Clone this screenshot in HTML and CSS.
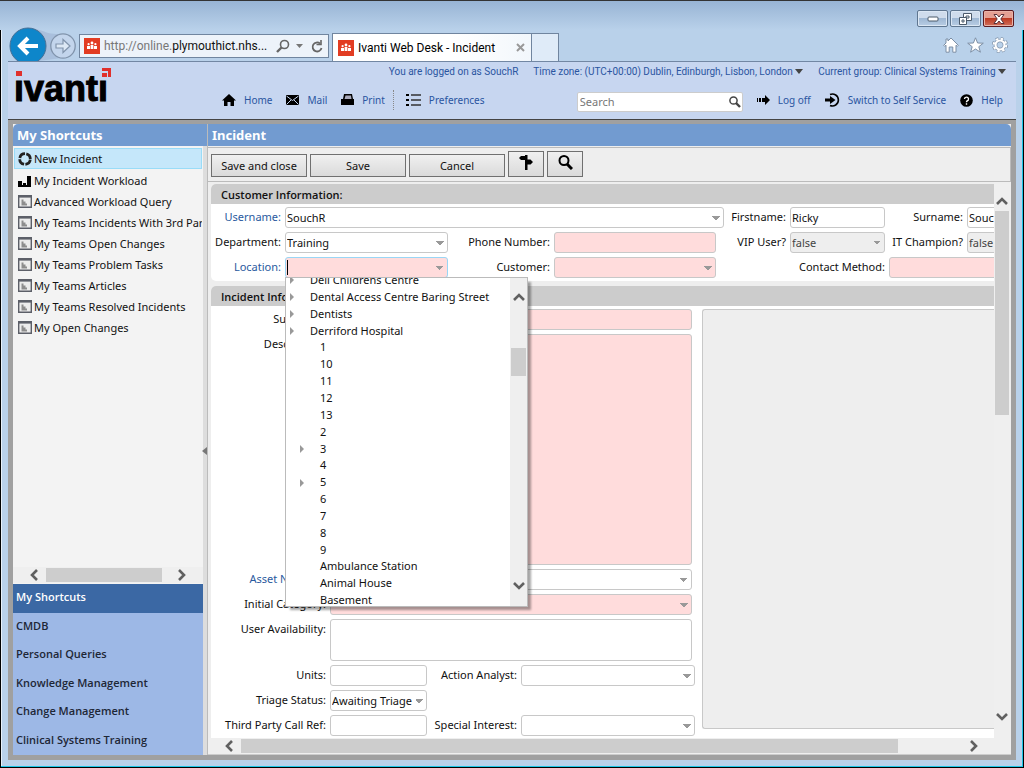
FILE: index.html
```html
<!DOCTYPE html>
<html lang="en">
<head>
<meta charset="utf-8">
<title>Ivanti Web Desk - Incident</title>
<link rel="stylesheet" href="styles.css">
</head>
<body>
<svg class="defs" aria-hidden="true">
  <symbol id="people" viewBox="0 0 16 16"><rect width="16" height="16" fill="#e23c22"/><g fill="#fff"><circle cx="8" cy="5" r="1.4"/><circle cx="4.6" cy="6.2" r="1.1"/><circle cx="11.4" cy="6.2" r="1.1"/><path d="M6.6 7h2.8v4H6.6zM3 8h3v3H3zM10 8h3v3h-3z"/></g></symbol>
  <symbol id="query" viewBox="0 0 14 13"><path d="M.7.7h12.6v11.6H.7z" fill="#ececec" stroke="#5c5f68" stroke-width="1.4"/><path d="M1 1.8h12" stroke="#5c5f68" stroke-width="1.6"/><path d="M3.5 4.5h2v2h2v2h1.5v2H3.5z" fill="#8d8d8d"/></symbol>
  <symbol id="up" viewBox="0 0 12 8"><path d="M1 7l5-5 5 5" fill="none" stroke="#606060" stroke-width="2.6"/></symbol>
</svg>
<div class="window">
  <header class="titlebar">
    <button class="win" aria-label="Minimize"><svg width="12" height="6"><rect x="1" y="1" width="10" height="4" rx="1" fill="#fff" stroke="#4b5a6b"/></svg></button>
    <button class="win" aria-label="Restore"><svg width="13" height="12" fill="#fff" stroke="#4b5a6b"><path d="M4.500.5h8v7h-8z"/><path d="M7 3h3v2H7z"/><path d="M.5 4.500h7v7h-7z"/><path d="M3 7h2v2H3z"/></svg></button>
    <button class="win close" aria-label="Close"><svg width="12" height="10"><path d="M1 .5h3l2 2.500 2-2.500h3L7.800 5 11 9.500H8L6 7 4 9.500H1L4.200 5z" fill="#fff" stroke="#59323a"/></svg></button>
  </header>
  <div class="frame">
    <div class="chrome">
      <div class="history">
        <svg width="70" height="35" viewBox="0 0 70 35">
          <path d="M20 1c14 0 16 7 34 6v24L22 35z" fill="#a9bfdc"/>
          <circle cx="20" cy="19" r="18" fill="#0e86ca" stroke="#476f95"/>
          <path d="M30 19H13m7-8l-8 8 8 8" fill="none" stroke="#fff" stroke-width="4"/>
          <circle cx="55" cy="19" r="12.200" fill="#c3d5ec" stroke="#8194ac" stroke-width="1.300"/>
          <path d="M48 17h7v-4.500l7 6.500-7 6.500V21h-7z" fill="#dce8f5" stroke="#8194ac" stroke-width="1.200"/>
        </svg>
      </div>
      <div class="address">
        <svg width="16" height="16"><use href="#people"/></svg>
        <span class="url">http://online.<b>plymouthict.nhs...</b></span>
        <svg width="14" height="14" fill="none" stroke="#666"><circle cx="8.500" cy="5.500" r="4" stroke-width="1.600"/><path d="M5.500 8.500L1 13" stroke-width="2.400"/></svg>
        <svg width="7" height="4"><path d="M0 0h7L3.500 4z" fill="#777"/></svg>
        <svg class="reload" width="12" height="13" fill="none" stroke="#666" stroke-width="1.800"><path d="M9 3.500a4.500 4.500 0 1 0 1.500 4.500"/><path d="M10 0v4.500H5.500" stroke-width="1.600"/></svg>
      </div>
      <div class="tab">
        <svg width="16" height="16"><use href="#people"/></svg>
        <span class="tabname">Ivanti Web Desk - Incident</span>
        <svg width="9" height="9"><path d="M1 1l7 7M8 1L1 8" stroke="#999" stroke-width="2"/></svg>
      </div>
      <div class="newtab"></div>
      <div class="tools">
        <svg width="16" height="16" fill="#fff" stroke="#7d8fa5"><path d="M8 1l7.300 7.300-1 1L13 8.200v7H9.800V10H6.200v5.200H3v-7L1.700 9.300l-1-1L3 6V2h2v2z"/></svg>
        <svg width="17" height="16" fill="#fff" stroke="#7d8fa5"><path d="M8.500.8l2.100 5.200 5.700.2-4.500 3.500 1.600 5.500-4.900-3.200-4.900 3.200 1.600-5.500L.7 6.200l5.700-.2z"/></svg>
        <svg width="16" height="16" viewBox="-8 -8 16 16"><circle r="6.500" fill="none" stroke="#7d8fa5" stroke-width="3" stroke-dasharray="2.800 2.300"/><circle r="4.500" fill="none" stroke="#7d8fa5" stroke-width="3.600"/><circle r="6.300" fill="none" stroke="#fff" stroke-width="2" stroke-dasharray="2.400 2.550"/><circle r="4.500" fill="none" stroke="#fff" stroke-width="2.200"/></svg>
      </div>
    </div>

    <div class="page">
      <div class="banner">
        <svg class="logo" width="98" height="38" viewBox="0 0 98 38" role="img" aria-label="ivanti">
          <text class="logotext" x="-1" y="35">ivanti</text>
          <path d="M0 0h14v13H0zM80 0h18v13H80z" fill="#c7d6f0"/>
          <path d="M1 5h6v5H1zM87 2h9v9h-3V5h-6zM87 7h5v4h-5z" fill="#e0302c"/>
        </svg>
        <div class="bannerlinks">
          <div class="status">
            <span>You are logged on as SouchR</span>
            <button class="plain">Time zone: (UTC+00:00) Dublin, Edinburgh, Lisbon, London <i class="caret"></i></button>
            <button class="plain">Current group: Clinical Systems Training <i class="caret"></i></button>
          </div>
          <div class="menu">
            <a href="#"><svg width="14" height="12"><path d="M7 0l7 6.500h-2V12H8.500V8h-3v4H2V6.500H0z"/></svg>Home</a>
            <a href="#"><svg width="13" height="10"><path d="M0 0h13v10H0z"/><path d="M.5 1l6 4.500 6-4.500M.5 9.500L5 5M12.500 9.500L8 5" fill="none" stroke="#c7d6f0"/></svg>Mail</a>
            <a href="#"><svg width="13" height="12"><path d="M3 0h8l1 5h1v6H0V5h2z"/><path d="M4.500 1.500h5.500l.5 3.500h-7z" fill="#aab"/></svg>Print</a>
            <a class="prefs" href="#"><svg width="15" height="12"><path d="M0 1h3M0 6h3M0 11h3" stroke="#000" stroke-width="2"/><path d="M5 1h10M5 6h10M5 11h10" stroke="#333" stroke-width="1.400"/></svg>Preferences</a>
            <form class="search"><input type="text" placeholder="Search" aria-label="Search"><button class="plain" type="button" aria-label="Search"><svg width="12" height="12" fill="none" stroke="#444"><circle cx="4.500" cy="4.500" r="3.600" stroke-width="1.500"/><path d="M7 7l4 4" stroke-width="2.400"/></svg></button></form>
            <a href="#"><svg width="13" height="10"><path d="M0 3h1v4H0zM2 3h2v4H2zM5 3h3V0l5 5-5 5V7H5z"/></svg>Log off</a>
            <a href="#"><svg width="15" height="14"><path d="M5 1.500a6 6 0 1 1 0 11" fill="none" stroke="#000" stroke-width="1.600"/><path d="M0 5.500h5V3l5.500 4L5 11V8.500H0z"/></svg>Switch to Self Service</a>
            <a href="#"><svg width="13" height="13"><circle cx="6.500" cy="6.500" r="6.300"/><path d="M4.500 5a2 2 0 1 1 2.600 2c-.6.300-.6.600-.6 1.300M6.500 9.300v1.500" fill="none" stroke="#fff" stroke-width="1.400"/></svg>Help</a>
          </div>
        </div>
      </div>

      <div class="desk">
        <aside class="side">
          <h2 class="title">My Shortcuts</h2>
          <ul class="shortcuts">
            <li class="current"><svg width="14" height="14" viewBox="-7 -7 14 14"><circle r="5.300" fill="none" stroke="#222" stroke-width="2.800" stroke-dasharray="7 1.325" stroke-dashoffset="-.7"/></svg><a href="#">New Incident</a></li>
            <li><svg width="14" height="12"><path d="M0 6h4v5H0zM5 8h3v3H5zM9 1h4v10H9zM0 10h13v2H0z"/></svg><a href="#">My Incident Workload</a></li>
            <li><svg width="14" height="13"><use href="#query"/></svg><a href="#">Advanced Workload Query</a></li>
            <li><svg width="14" height="13"><use href="#query"/></svg><a href="#">My Teams Incidents With 3rd Party</a></li>
            <li><svg width="14" height="13"><use href="#query"/></svg><a href="#">My Teams Open Changes</a></li>
            <li><svg width="14" height="13"><use href="#query"/></svg><a href="#">My Teams Problem Tasks</a></li>
            <li><svg width="14" height="13"><use href="#query"/></svg><a href="#">My Teams Articles</a></li>
            <li><svg width="14" height="13"><use href="#query"/></svg><a href="#">My Teams Resolved Incidents</a></li>
            <li><svg width="14" height="13"><use href="#query"/></svg><a href="#">My Open Changes</a></li>
          </ul>
          <div class="hbar sidebar-scroll"><svg class="left" width="12" height="8"><use href="#up"/></svg><span class="thumb"></span><svg class="right" width="12" height="8"><use href="#up"/></svg></div>
          <nav class="groups">
            <a class="on" href="#">My Shortcuts</a>
            <a href="#">CMDB</a>
            <a href="#">Personal Queries</a>
            <a href="#">Knowledge Management</a>
            <a href="#">Change Management</a>
            <a href="#">Clinical Systems Training</a>
          </nav>
        </aside>
        <div class="splitter"><svg width="5" height="8"><path d="M5 0v8L0 4z" fill="#777"/></svg></div>

        <main class="main">
          <h1 class="title">Incident</h1>
          <div class="toolbar">
            <button>Save and close</button>
            <button>Save</button>
            <button>Cancel</button>
            <button class="icon" aria-label="Actions"><svg width="14" height="15"><path d="M6 0h2.500v15H6zM0 3l2-2h4v4H2zM14 7l-2.500 2.500h-3v-5h3z"/></svg></button>
            <button class="icon" aria-label="Find"><svg width="15" height="15" fill="none" stroke="#000"><circle cx="6" cy="5.500" r="4.500" stroke-width="2"/><path d="M9 9l5 5" stroke-width="3"/></svg></button>
          </div>
          <div class="pane">
            <div class="scroll">
              <section class="card">
                <h3>Customer Information:</h3>
                <form class="customer">
                  <label class="link" for="user">Username:</label>
                  <select class="c-user" id="user"><option>SouchR</option></select>
                  <label class="c-first" for="first">Firstname:</label>
                  <input id="first" type="text" value="Ricky">
                  <label class="c-sur" for="sur">Surname:</label>
                  <input class="c-last" id="sur" type="text" value="Souch">

                  <label for="dept">Department:</label>
                  <select id="dept"><option>Training</option></select>
                  <label for="phone">Phone Number:</label>
                  <input class="need" id="phone" type="text">
                  <label class="c-vip" for="vip">VIP User?</label>
                  <select id="vip" disabled><option>false</option></select>
                  <label class="c-sur" for="champ">IT Champion?</label>
                  <select class="c-last" id="champ" disabled><option>false</option></select>

                  <label class="link" for="loc">Location:</label>
                  <div class="combo">
                    <input class="need drop focus" id="loc" type="text" role="combobox" aria-expanded="true">
                    <span class="beam"></span>
                    <div class="popup">
                      <ul class="tree">
                        <li class="branch">Dell Childrens Centre</li>
                        <li class="branch">Dental Access Centre Baring Street</li>
                        <li class="branch">Dentists</li>
                        <li class="branch">Derriford Hospital</li>
                        <li class="sub">1</li>
                        <li class="sub">10</li>
                        <li class="sub">11</li>
                        <li class="sub">12</li>
                        <li class="sub">13</li>
                        <li class="sub">2</li>
                        <li class="sub branch">3</li>
                        <li class="sub">4</li>
                        <li class="sub branch">5</li>
                        <li class="sub">6</li>
                        <li class="sub">7</li>
                        <li class="sub">8</li>
                        <li class="sub">9</li>
                        <li class="sub">Ambulance Station</li>
                        <li class="sub">Animal House</li>
                        <li class="sub">Basement</li>
                      </ul>
                      <div class="popbar"><svg width="12" height="8"><use href="#up"/></svg><span class="thumb"></span><svg class="down" width="12" height="8"><use href="#up"/></svg></div>
                    </div>
                  </div>
                  <label for="cust">Customer:</label>
                  <select class="need" id="cust"><option></option></select>
                  <label class="c-method" for="method">Contact Method:</label>
                  <select class="c-methodbox need" id="method"><option></option></select>
                </form>
              </section>

              <section class="card grow">
                <h3>Incident Information:</h3>
                <div class="split">
                  <form class="incident">
                    <label for="sum">Summary:</label>
                    <input class="wide need" id="sum" type="text">
                    <label for="desc">Description:</label>
                    <textarea class="wide need" id="desc"></textarea>
                    <label class="link" for="asset">Asset Number:</label>
                    <select class="wide" id="asset"><option></option></select>
                    <label for="cat">Initial Category:</label>
                    <select class="wide need" id="cat"><option></option></select>
                    <label for="avail">User Availability:</label>
                    <textarea class="wide" id="avail"></textarea>
                    <label for="units">Units:</label>
                    <input id="units" type="text">
                    <label class="mid" for="analyst">Action Analyst:</label>
                    <select class="end" id="analyst"><option></option></select>
                    <label for="triage">Triage Status:</label>
                    <select id="triage"><option>Awaiting Triage</option></select>
                    <label for="third">Third Party Call Ref:</label>
                    <input id="third" type="text">
                    <label class="mid" for="special">Special Interest:</label>
                    <select class="end" id="special"><option></option></select>
                  </form>
                  <div class="notes"></div>
                </div>
              </section>
            </div>
            <div class="vbar"><svg width="12" height="8"><use href="#up"/></svg><span class="thumb"></span><svg class="down" width="12" height="8"><use href="#up"/></svg></div>
          </div>
          <div class="hbar main-scroll"><svg class="left" width="12" height="8"><use href="#up"/></svg><span class="thumb"></span><svg class="right" width="12" height="8"><use href="#up"/></svg></div>
        </main>
      </div>
    </div>
  </div>
</div>
</body>
</html>
```

FILE: styles.css
```css
* { box-sizing: border-box; }
body {
  margin: 0;
  font: 11px/16px "Noto Sans", "Open Sans", sans-serif;
  color: #111;
}
button, input, select, textarea { font: inherit; color: inherit; margin: 0; }
a { color: inherit; text-decoration: none; }
ul { list-style: none; margin: 0; padding: 0; }
h1, h2, h3 { margin: 0; }
svg { flex: none; display: block; }
.defs { position: absolute; width: 0; height: 0; }

/* Browser window */
.window { min-height: 100vh; display: flex; flex-direction: column; background: #b9d1ea; }
.titlebar {
  flex: none;
  height: 30px;
  border-top: 1px solid #333;
  padding: 9px 10px 0 0;
  display: flex;
  justify-content: flex-end;
  gap: 2px;
  background: linear-gradient(#98b4d4, #b9d1ea);
}
.win {
  width: 31px;
  height: 17px;
  padding: 0;
  display: flex;
  align-items: center;
  justify-content: center;
  border: 1px solid #5f7690;
  border-radius: 2px;
  background: linear-gradient(#cfdcec 50%, #9fb8d4 50%, #b8cde4);
  box-shadow: inset 0 0 0 1px #dbe7f4;
}
.win.close {
  border-color: #5a1a20;
  background: linear-gradient(#e5a093 50%, #bd3a22 50%, #d0705c);
  box-shadow: inset 0 0 0 1px #e9b3a8;
}
.frame {
  flex: 1;
  display: flex;
  flex-direction: column;
  padding: 0 7px 7px 7px;
  border: solid #000;
  border-width: 0 1px 1px;
  box-shadow: inset -1px -1px #1cc5e6, inset 1px 0 #e8f1fa;
}
.chrome { flex: none; height: 32px; display: flex; align-items: flex-end; border-bottom: 1px solid #7287a3; }
.history { height: 34px; width: 71px; overflow: hidden; }
.address {
  width: 250px;
  height: 24px;
  margin-bottom: 3px;
  padding: 0 5px 0 4px;
  display: flex;
  align-items: center;
  border: 1px solid #70859f;
  background: #edf3fa;
}
.url { flex: 1; margin-left: 4px; font: 12px/16px Roboto, "Noto Sans", sans-serif; color: #777; white-space: nowrap; }
.url b { color: #111; font-weight: 400; }
.address svg + svg { margin-left: 6px; }
.address .reload { margin-left: 8px; }
.tab {
  width: 200px;
  height: 28px;
  margin-left: 3px;
  padding: 0 6px 0 5px;
  display: flex;
  align-items: center;
  border: 1px solid #70859f;
  border-bottom: 0;
  background: linear-gradient(90deg, #fff 60%, #f2f7fc);
}
.tabname { flex: 1; margin-left: 4px; font: 12px/16px Roboto, "Noto Sans", sans-serif; color: #000; white-space: nowrap; }
.newtab { width: 27px; height: 28px; border: 1px solid #70859f; border-width: 1px 1px 0 0; background: #dfebf8; }
.tools { flex: 1; display: flex; justify-content: flex-end; gap: 8px; padding: 0 8px 8px 0; }

/* Page header */
.page { flex: 1; display: flex; flex-direction: column; }
.banner {
  flex: none;
  height: 58px;
  padding-left: 7px;
  display: flex;
  background: #c7d6f0;
  border-bottom: 1px solid #444;
  color: #2a55a0;
}
.logo { margin-top: 4px; }
.logotext { font: bold 36px "Liberation Sans Narrow", "Liberation Sans", sans-serif; fill: #000; stroke: #000; stroke-width: 1px; }
.plain { padding: 0; border: 0; background: none; white-space: nowrap; }
.bannerlinks { flex: 1; min-width: 0; padding-right: 10px; }
.status { display: flex; justify-content: flex-end; gap: 15px; padding-top: 2px; font-family: Roboto, "Noto Sans", sans-serif; font-size: 10px; white-space: nowrap; }
.caret { display: inline-block; border: 4px solid transparent; border-top: 5px solid #444; border-bottom: 0; vertical-align: 1px; }
.menu { display: flex; align-items: center; height: 20px; margin-top: 10px; padding: 0 3px 0 109px; gap: 14px; font-size: 10px; white-space: nowrap; }
.menu a { display: flex; align-items: center; gap: 8px; }
.menu .prefs { padding-left: 12px; margin-left: -6px; border-left: 1px dotted #888; height: 20px; }
.search { margin: 4px 0 0 auto; width: 166px; height: 20px; display: flex; align-items: center; padding: 0 1px; background: #fff; border: 1px solid #ccc; border-radius: 2px; font-size: 11px; }
.search input { flex: 1; min-width: 0; border: 0; padding: 0; background: none; }
.search input::placeholder { color: #777; }

/* Desk */
.desk { flex: 1; display: flex; padding: 4px 5px 5px; background: #a0a0a0; }
.title {
  flex: none;
  height: 22px;
  padding-left: 4px;
  font-size: 13px;
  line-height: 22px;
  font-weight: 700;
  color: #fff;
  background: #729bd0;
}
.side { flex: none; width: 190px; display: flex; flex-direction: column; background: #f3f3f3; }
.side .title { border-top-left-radius: 5px; }
.shortcuts { flex: 1; overflow: hidden; padding: 2px 1px 0; white-space: nowrap; }
.shortcuts li { height: 21px; display: flex; align-items: center; gap: 2px; padding-left: 4px; overflow: hidden; }
.shortcuts .current { padding-left: 3px; margin-bottom: 1px; background: #c5e7fa; border: 1px solid #99dcf8; }
.thumb { background: #cdcdcd; }
.left { transform: rotate(-90deg); }
.right { transform: rotate(90deg); }
.down { transform: rotate(180deg); }
.hbar { flex: none; height: 16px; display: flex; align-items: center; background: #efefef; }
.hbar .thumb { height: 14px; }
.sidebar-scroll { padding: 0 15px; margin-bottom: 1px; }
.sidebar-scroll .thumb { flex: 1; margin: 0 14px 0 6px; }
.groups { flex: none; height: 171px; display: grid; grid-auto-rows: 1fr; background: #9db8e6; color: #1e2736; font-family: "Open Sans", "Noto Sans", sans-serif; font-weight: 600; }
.groups a { padding: 5px 3px; }
.groups .on { background: #3b68a4; color: #fff; }
.splitter { flex: none; width: 4px; display: flex; align-items: center; background: #ddd; border-top: 22px solid #729bd0; }
.splitter svg { margin-left: -1px; }

/* Incident form */
.main { flex: 1; min-width: 0; display: flex; flex-direction: column; background: #eee; border-left: 1px solid #bbb; }
.main .title { border-top-right-radius: 5px; }
.toolbar { flex: none; height: 35px; margin-top: 1px; padding: 0 0 4px 3px; display: flex; align-items: flex-end; gap: 3px; border: 1px solid #bbb; border-left: 0; }
.toolbar button { width: 96px; height: 23px; padding: 0; border: 1px solid #707070; background: linear-gradient(#f0f0f0, #dadada); }
.toolbar .icon { width: 36px; height: 26px; padding-bottom: 3px; display: flex; align-items: center; justify-content: center; }
.pane { flex: 1; min-height: 0; display: flex; }
.scroll { flex: 1; min-width: 0; display: flex; flex-direction: column; gap: 5px; padding: 2px 0 0 3px; overflow: hidden; }
.card { background: #fff; border-radius: 5px 0 0 5px; }
.card h3 { height: 20px; padding-left: 10px; font: 600 11px/21px "Open Sans", "Noto Sans", sans-serif; background: #ccc; border-top-left-radius: 5px; }
.grow { flex: 1; display: flex; flex-direction: column; border-bottom-left-radius: 0; }
.customer {
  display: grid;
  grid-template-columns: 74px 163px 106px 162px 8px 66px 95px 4px 78px 120px;
  grid-auto-rows: 21px;
  row-gap: 4px;
  padding: 3px 0 3px;
}
label { justify-self: end; padding: 2px 4px 0 0; white-space: nowrap; }
.link { color: #2a5a9e; }
input[type="text"], select, textarea {
  width: 100%;
  min-width: 0;
  height: 100%;
  padding: 0 1px;
  border: 1px solid #c8c8c8;
  border-radius: 3px;
  background-color: #fff;
  outline: 0;
  resize: none;
}
.search input[type="text"] { border: 0; height: 16px; }
select { appearance: none; }
select, .drop {
  background-image: linear-gradient(to top right, transparent 50%, #999 50%), linear-gradient(to top left, transparent 50%, #999 50%);
  background-size: 4px 4px;
  background-position: right 7px center, right 3px center;
  background-repeat: no-repeat;
}
select:disabled { background-color: #eee; color: #444; opacity: 1; }
input.need, select.need, textarea.need { background-color: #ffdcdc; }
input.focus { border-color: #99d6f5; }
.c-user { grid-column: 2 / 6; }
.c-first { grid-column: 6; }
.c-vip { grid-column: 5 / 7; }
.c-sur { grid-column: 8 / 10; }
.c-last { grid-column: 10; }
.c-method { grid-column: 6 / 9; }
.c-methodbox { grid-column: 9 / 11; }
.combo { position: relative; }
.beam { position: absolute; left: 2px; top: 3px; width: 1px; height: 15px; background: #000; }
.popup {
  position: absolute;
  z-index: 2;
  left: 0;
  top: 20px;
  width: 243px;
  height: 330px;
  display: flex;
  overflow: hidden;
  background: #fff;
  border: 1px solid #bbb;
}
.combo::after { content: ""; position: absolute; z-index: 1; left: 5px; top: 25px; width: 241px; height: 328px; background: rgba(0, 0, 0, .35); filter: blur(1px); }
.tree { flex: 1; height: 337px; margin-top: -6px; display: grid; grid-auto-rows: 1fr; line-height: 16px; white-space: nowrap; }
.tree li { display: flex; padding-left: 24px; }
.tree .sub { padding-left: 34px; }
.tree .branch::before { content: ""; align-self: center; margin: 0 16px 0 -20px; border: 4px solid transparent; border-left: 4px solid #999; border-right: 0; }
.popbar, .vbar { flex: none; width: 16px; display: flex; flex-direction: column; align-items: center; padding: 15px 0 16px; background: #efefef; }
.popbar { width: 17px; }
.popbar .thumb { width: 15px; height: 28px; margin: 47px 0 auto; }
.vbar { margin-right: 1px; padding: 15px 0 17px; }
.vbar .thumb { width: 14px; height: 204px; margin: 6px 0 auto; }
.split { flex: 1; display: flex; gap: 7px; padding: 3px 0 2px; }
.incident {
  display: grid;
  grid-template-columns: 119px 97px 94px 171px 3px;
  grid-template-rows: 21px minmax(231px, 1fr) 21px 21px 42px 21px 21px 21px;
  row-gap: 4px;
}
.incident label { grid-column: 1; }
.incident .mid { grid-column: 3; }
.wide { grid-column: 2 / 5; }
.end { grid-column: 4 / 6; }
.notes { flex: 1; margin-bottom: 7px; background: #eee; border: 1px solid #c8c8c8; border-right: 0; border-radius: 3px 0 0 3px; }
.main-scroll { height: 17px; padding: 0 31px 0 15px; border-bottom: 1px solid #ccc; }
.main-scroll .thumb { flex: 1; margin: 0 70px 0 6px; }
```
